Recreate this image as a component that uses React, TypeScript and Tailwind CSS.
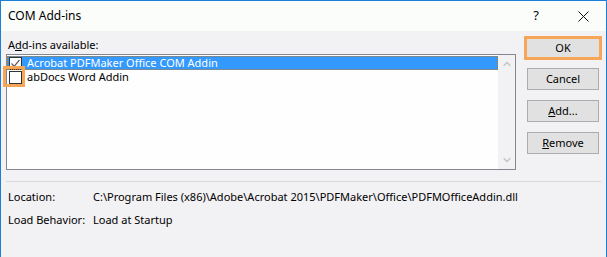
import { ChevronUp, ChevronDown } from "lucide-react"

function Check({ checked }: { checked: boolean }) {
  return (
    <div className="w-[13px] h-[13px] shrink-0 border border-[#333333] bg-white flex items-center justify-center">
      {checked && (
        <svg width="11" height="11" viewBox="0 0 11 11">
          <path d="M1.5 5.5 L4.2 8.3 L9.5 1.8" fill="none" stroke="#555555" strokeWidth="1.2" />
        </svg>
      )}
    </div>
  )
}

function Btn({ label, u, rest }: { label?: string; u?: string; rest?: string }) {
  return (
    <button className="w-[72px] h-[22px] bg-[#e1e1e1] border border-[#adadad] text-[11px] text-black flex items-center justify-center">
      {label}
      {u && <span className="underline">{u}</span>}
      {rest}
    </button>
  )
}

export default function App() {
  return (
    <div
      className="w-[607px] h-[257px] border-l border-r border-t border-[#1a7fd9] bg-[#f2f1f4] flex flex-col overflow-hidden"
      style={{ fontFamily: '"Noto Sans", "Liberation Sans", sans-serif' }}
    >
      {/* title bar */}
      <div className="h-[30px] shrink-0 bg-[#fbfdfb] flex items-center pl-[7px] text-[12px] text-black">
        <span>COM Add-ins</span>
        <span className="ml-auto w-[20px] text-center text-[13px]">?</span>
        <svg className="ml-[32px] mr-[17px]" width="11" height="11" viewBox="0 0 11 11">
          <path d="M0.5 0.5 L10.5 10.5 M10.5 0.5 L0.5 10.5" stroke="#111" strokeWidth="1" />
        </svg>
      </div>

      <div className="flex">
        {/* left column */}
        <div className="flex flex-col pl-[5px] w-[516px]">
          <div className="h-[23px] pt-[7px] pl-[2px] text-[11px] leading-[14px] text-black">
            A<span className="underline">d</span>d-ins available:
          </div>
          <div className="w-[510px] h-[116px] border border-[#828790] bg-[#fdfefd] flex">
            <div className="flex-1 pt-[1px] text-[11px] leading-[14px]">
              <div className="h-[14px] bg-[#3399ff] outline-dotted outline-1 -outline-offset-1 outline-[#c07a20] flex items-center gap-[5px] pl-[2px] text-white">
                <Check checked />
                <span>Acrobat PDFMaker Office COM Addin</span>
              </div>
              <div className="h-[14px] flex items-center gap-[5px] pl-[2px] text-black relative">
                <Check checked={false} />
                <span>abDocs Word Addin</span>
                <div className="absolute left-[-4px] top-[-4px] w-[22px] h-[21px] border-[3px] border-[#f7a657]" />
              </div>
            </div>
            <div className="w-[17px] bg-[#f2f1f4] flex flex-col items-center justify-between py-[3px]">
              <ChevronUp size={12} color="#c2c2c2" strokeWidth={2.5} />
              <ChevronDown size={12} color="#c2c2c2" strokeWidth={2.5} />
            </div>
          </div>
        </div>

        {/* right column */}
        <div className="flex flex-col items-center pl-[7px] pt-[5px]">
          <div className="border-[3px] border-[#f7a657]">
            <button className="w-[72px] h-[18px] bg-[#e1e1e1] text-[11px] text-black flex items-center justify-center">
              OK
            </button>
          </div>
          <div className="mt-[8px] flex flex-col gap-[10px]">
            <Btn label="Cancel" />
            <Btn u="A" rest="dd..." />
            <Btn u="R" rest="emove" />
          </div>
        </div>
      </div>

      <div className="mt-[11px] mx-[5px] border-t border-[#d9d8dc]" />

      <div className="pl-[7px] pt-[3px] text-[11px] leading-[23px] text-black grid grid-cols-[85px_1fr]">
        <span>Location:</span>
        <span>C:\Program Files (x86)\Adobe\Acrobat 2015\PDFMaker\Office\PDFMOfficeAddin.dll</span>
        <span>Load Behavior:</span>
        <span>Load at Startup</span>
      </div>
    </div>
  )
}
